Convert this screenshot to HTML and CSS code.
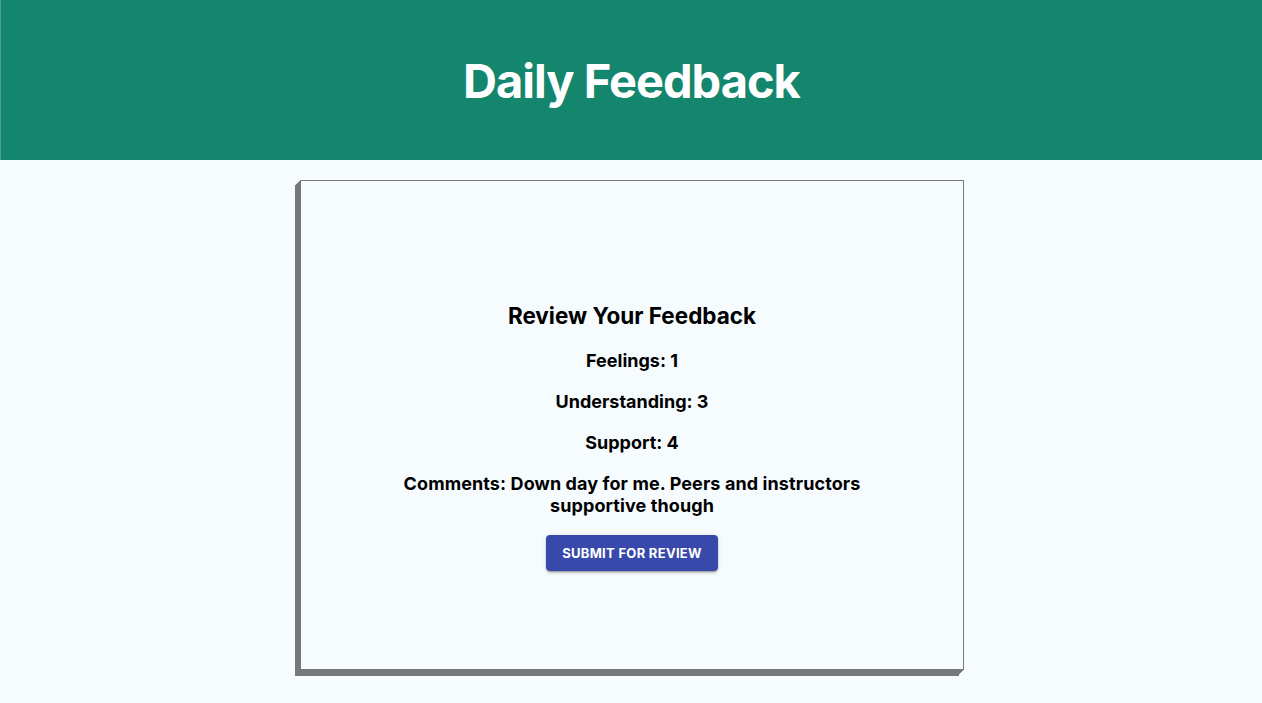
FILE: index.html
```html
<!DOCTYPE html>
<html lang="en">
<head>
<meta charset="utf-8">
<title>Daily Feedback</title>
<link rel="stylesheet" href="styles.css">
</head>
<body>
<header class="app-header">
  <h1 class="app-title">Daily Feedback</h1>
</header>
<main class="page">
  <section class="review-card">
    <h2 class="review-title">Review Your Feedback</h2>
    <p class="review-line">Feelings: 1</p>
    <p class="review-line">Understanding: 3</p>
    <p class="review-line">Support: 4</p>
    <p class="review-line review-comments">Comments: Down day for me. Peers and instructors supportive though</p>
    <button class="submit-btn" type="button">Submit for Review</button>
  </section>
</main>
</body>
</html>
```

FILE: styles.css
```css
* { box-sizing: border-box; }
html, body { margin: 0; padding: 0; }
body {
  background: #f6fbfe;
  font-family: Inter, "Noto Sans", "Liberation Sans", sans-serif;
  color: #000;
  height: 703px;
  overflow: hidden;
}
.app-header {
  background: #14866d;
  height: 160px;
  border-left: 1px solid #4ea190;
  display: flex;
  align-items: center;
  justify-content: center;
}
.app-title {
  margin: 0;
  color: #fff;
  font-size: 47px;
  font-weight: 700;
  letter-spacing: -1px;
  line-height: 1;
}
.page {
  display: flex;
  justify-content: center;
  padding-top: 20px;
  padding-left: 2px;
}
.review-card {
  width: 664px;
  height: 490px;
  border: 1px solid #777879;
  box-shadow:
    -1px 1px 0 #777879,
    -2px 2px 0 #777879,
    -3px 3px 0 #777879,
    -4px 4px 0 #777879,
    -5px 5px 0 #777879,
    -5px 6px 0 #777879;
  display: flex;
  flex-direction: column;
  align-items: center;
  justify-content: center;
  padding-top: 22px;
  text-align: center;
}
.review-title {
  margin: 0 0 20px;
  font-size: 22.5px;
  line-height: 28px;
  font-weight: 700;
}
.review-line {
  margin: 0 0 19px;
  font-size: 18px;
  line-height: 22px;
  font-weight: 700;
}
.review-comments {
  max-width: 480px;
  margin-bottom: 18px;
  letter-spacing: 0.1px;
}
.submit-btn {
  background: #3949ab;
  color: #fff;
  border: 0;
  border-radius: 4px;
  height: 36px;
  padding: 0 16px;
  font-family: Inter, "Noto Sans", "Liberation Sans", sans-serif;
  font-size: 13px;
  font-weight: 700;
  letter-spacing: 0.3px;
  text-transform: uppercase;
  box-shadow: 0 3px 1px -2px rgba(0,0,0,0.2), 0 2px 2px 0 rgba(0,0,0,0.14), 0 1px 5px 0 rgba(0,0,0,0.12);
  cursor: pointer;
}
```
